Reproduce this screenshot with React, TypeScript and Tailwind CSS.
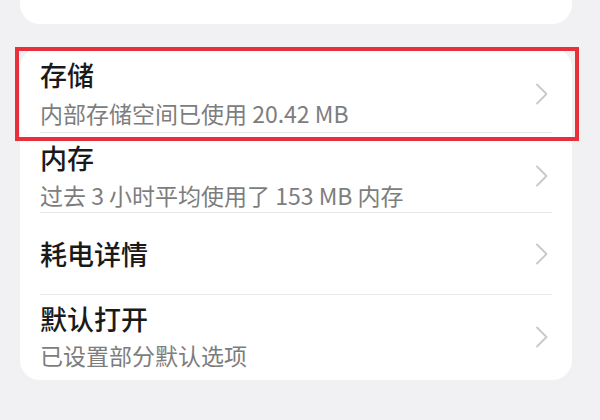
const font = { fontFamily: '"Noto Sans CJK SC", "Noto Sans", sans-serif' }

type Row = {
  title: string
  sub?: string
  pad: string
  gap: string
  highlight?: boolean
  last?: boolean
}

const rows: Row[] = [
  { title: '存储', sub: '内部存储空间已使用 20.42 MB', pad: 'pt-[11px] pb-[4px]', gap: 'mt-[7px]', highlight: true },
  { title: '内存', sub: '过去 3 小时平均使用了 153 MB 内存', pad: 'pt-[9px] pb-[2px]', gap: 'mt-[6px]' },
  { title: '耗电详情', pad: 'pt-[25px] pb-[24px]', gap: '' },
  { title: '默认打开', sub: '已设置部分默认选项', pad: 'pt-[8px] pb-[10px]', gap: 'mt-[5px]', last: true },
]

function Chevron() {
  return (
    <svg width="14" height="22" viewBox="0 0 14 22" fill="none" className="shrink-0">
      <path d="M2 1.5 L11.5 11 L2 20.5" stroke="#c8c8ca" strokeWidth="1.8" strokeLinecap="round" strokeLinejoin="round" />
    </svg>
  )
}

export default function App() {
  return (
    <main className="w-[600px] h-[420px] overflow-hidden bg-[#f1f1f3] pl-[20px] pr-[28px]" style={font}>
      {/* card cut off at the top */}
      <div className="h-[24px] bg-white rounded-b-[20px]" />

      <div className="mt-[24px] bg-white rounded-[20px]">
        {rows.map((r) => (
          <div key={r.title} className="relative px-[20px]">
            <div
              className={`flex items-center justify-between ${r.pad} ${r.last ? '' : 'border-b border-[#e9e9eb]'}`}
            >
              <div>
                <div className="text-[27px] leading-[32px] font-medium text-[#1a1a1a]">{r.title}</div>
                {r.sub && (
                  <div className={`${r.gap} text-[23px] leading-[30px] text-[#7d7d7d]`}>{r.sub}</div>
                )}
              </div>
              <div className="pr-[3px]">
                <Chevron />
              </div>
            </div>
            {r.highlight && (
              <div className="absolute -left-[5px] -right-[7px] -top-[1px] -bottom-[8px] border-[4px] border-[#e9303a] pointer-events-none" />
            )}
          </div>
        ))}
      </div>
    </main>
  )
}
